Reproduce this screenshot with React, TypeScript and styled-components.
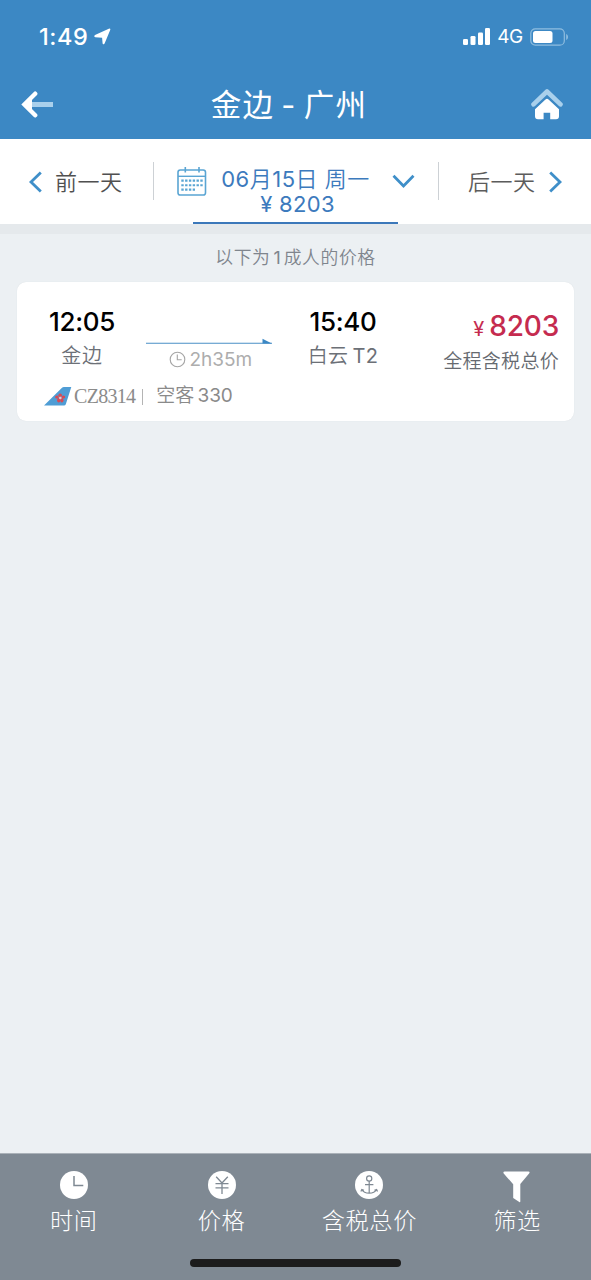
import React from 'react';
import styled, { createGlobalStyle } from 'styled-components';

const sans = `Inter, "Noto Sans CJK SC", sans-serif`;

const GlobalStyle = createGlobalStyle`
  * { box-sizing: border-box; }
  body { margin: 0; background: #ecf0f3; font-family: ${sans}; }
`;

const Screen = styled.div`
  width: 591px;
  height: 1280px;
  display: flex;
  flex-direction: column;
  background: #ecf0f3;
  overflow: hidden;
`;

const Header = styled.header`
  height: 139px;
  background: #3c88c4;
  color: #fff;
`;

const StatusBar = styled.div`
  height: 72px;
  padding: 1px 22px 0 39px;
  display: flex;
  align-items: center;
  justify-content: space-between;
`;

const StatusGroup = styled.div`
  display: flex;
  align-items: center;
`;

const NavBar = styled.div`
  height: 65px;
  padding: 0 27px 0 21px;
  display: flex;
  align-items: center;
  justify-content: space-between;
`;

const Label = styled.span<{
  $size: number;
  $color?: string;
  $weight?: number;
  $spacing?: number;
  $word?: number;
  $line?: number;
  $gap?: number;
  $end?: number;
  $serif?: boolean;
}>`
  font-family: ${p => (p.$serif ? '"Liberation Serif", serif' : sans)};
  font-size: ${p => p.$size}px;
  color: ${p => p.$color ?? 'inherit'};
  font-weight: ${p => p.$weight ?? 400};
  letter-spacing: ${p => p.$spacing ?? 0}px;
  word-spacing: ${p => p.$word ?? 0}px;
  line-height: ${p => p.$line ?? 26}px;
  margin-left: ${p => p.$gap ?? 0}px;
  margin-right: ${p => p.$end ?? 0}px;
  white-space: pre;
`;

const Digits = styled.span`
  font-weight: 400;
`;

const DateBar = styled.div`
  height: 85px;
  background: #fff;
  display: flex;
  align-items: flex-start;
`;

const DayButton = styled.div<{ $next?: boolean }>`
  width: ${p => (p.$next ? 152 : 153)}px;
  height: 85px;
  padding-left: ${p => (p.$next ? 29 : 28)}px;
  display: flex;
  align-items: center;
`;

const Separator = styled.div`
  width: 1px;
  height: 38px;
  margin-top: 23px;
  background: #cdd1d5;
`;

const DatePicker = styled.div`
  width: 284px;
  height: 85px;
  padding-left: 23px;
  display: flex;
  align-items: flex-start;
`;

const IconBox = styled.div<{ $top: number; $left?: number }>`
  display: flex;
  margin: ${p => p.$top}px 0 0 ${p => p.$left ?? 0}px;
`;

const DateText = styled.div`
  flex: none;
  width: 205px;
  height: 85px;
  margin: 0 -6px 0 -14px;
  padding-top: 28px;
  display: flex;
  flex-direction: column;
  align-items: center;
  border-bottom: 2px solid #3c78ba;
`;

const Row = styled.div`
  display: flex;
  align-items: baseline;
`;

const Strip = styled.div`
  height: 10px;
  background: #e5e9ec;
`;

const Notice = styled.div`
  height: 48px;
  padding-top: 11px;
  display: flex;
  justify-content: center;
  align-items: flex-start;
`;

const FlightCard = styled.article`
  width: 557px;
  height: 139px;
  margin-left: 17px;
  padding: 26px 15px 0 27px;
  background: #fff;
  border-radius: 9px;
  box-shadow: 0 0 1px #d5dade;
`;

const Journey = styled.div`
  height: 74px;
  display: flex;
`;

const Stop = styled.div<{ $width: number }>`
  width: ${p => p.$width}px;
  display: flex;
  flex-direction: column;
  align-items: center;
`;

const Duration = styled.div`
  width: 126px;
  margin: 30px 0 0 26px;
`;

const DurationText = styled.div`
  display: flex;
  align-items: center;
  padding-left: 23px;
  margin-top: 3px;
`;

const Price = styled.div`
  margin-left: auto;
  padding-top: 3px;
  display: flex;
  flex-direction: column;
  align-items: flex-end;
`;

const FlightInfo = styled.div`
  height: 28px;
  display: flex;
  align-items: center;
`;

const InfoBar = styled.div`
  width: 1px;
  height: 16px;
  margin: 2px 13px 0 7px;
  background: #b4b4b4;
`;

const Footer = styled.footer`
  height: 127px;
  margin-top: auto;
  border-top: 1px solid #aab1b8;
  background: #7f8993;
  color: #fff;
  display: flex;
  flex-direction: column;
  align-items: center;
`;

const Tabs = styled.div`
  width: 100%;
  height: 105px;
  display: flex;
`;

const Tab = styled.div`
  flex: 1;
  padding-top: 17px;
  display: flex;
  flex-direction: column;
  align-items: center;
`;

const TabIcon = styled.div`
  height: 34px;
`;

const HomeIndicator = styled.div`
  width: 211px;
  height: 8px;
  border-radius: 4px;
  background: #1c1c1c;
`;

const Chevron = ({ d, w, h }: { d: string; w: number; h: number }) => (
  <svg width={w} height={h} viewBox={`0 0 ${w} ${h}`} fill="none" stroke="#3f8fc9" strokeWidth="2.8">
    <path d={d} />
  </svg>
);

const Calendar = () => (
  <svg width="30" height="30" viewBox="0 0 30 30" fill="none" stroke="#5aa5d3">
    <rect x="1" y="3" width="27.5" height="25" rx="2.3" strokeWidth="1.6" />
    <path d="M1 9.3H28.5" strokeWidth="1.4" />
    <path d="M8.3 0V5.5M22 0V5.5" strokeWidth="1.6" />
    <path d="M4.3 13.6H26M4.3 18.2H26M4.3 22.6H18" strokeWidth="2.1" strokeDasharray="2.4 1.4" />
  </svg>
);

const tabs = [
  {
    name: '时间',
    icon: (
      <svg width="28" height="34" viewBox="0 0 28 34" fill="none">
        <circle cx="14" cy="14" r="14" fill="#fff" />
        <path d="M14 5V14.5H23.3" stroke="#7f8993" strokeWidth="1.5" />
      </svg>
    ),
  },
  {
    name: '价格',
    icon: (
      <svg width="28" height="34" viewBox="0 0 28 34" fill="none">
        <circle cx="14" cy="14" r="14" fill="#fff" />
        <path d="M8.2 5.8L14 12L19.8 5.8M14 12V23M7.5 12.6H20.5M7.5 16.8H20.5" stroke="#7f8993" strokeWidth="1.3" />
      </svg>
    ),
  },
  {
    name: '含税总价',
    icon: (
      <svg width="28" height="34" viewBox="0 0 28 34" fill="none">
        <circle cx="14" cy="14" r="14" fill="#fff" />
        <g stroke="#7f8993" strokeWidth="1.2">
          <circle cx="14.2" cy="7.5" r="2.6" />
          <path d="M14.2 10.1V22.2M10 13.6H18.4M6.8 18.7C9.5 23.2 18.8 23.2 21.6 18.7M5.9 20.6L6.8 18.5L9 19.3M22.5 20.6L21.6 18.5L19.4 19.3" />
        </g>
      </svg>
    ),
  },
  {
    name: '筛选',
    icon: (
      <svg width="28" height="34" viewBox="0 0 28 34">
        <path d="M1.8 .6H25.4Q27.4 .7 26.1 2.4L17.3 13V30.6Q17.2 31.5 16.3 31L10.2 27V13.3L.7 2.4Q-.3 .8 1.8 .6Z" fill="#fff" />
      </svg>
    ),
  },
];

export default function App() {
  return (
    <Screen>
      <GlobalStyle />
      <Header>
        <StatusBar>
          <StatusGroup>
            <Label $size={23.5} $weight={500} $spacing={0.6}>1:49</Label>
            <svg width="17" height="17" viewBox="0 0 17 17" style={{ marginLeft: 5 }}>
              <path d="M1 6.9L14.8 .7Q16.8 .1 16.2 2.1L10.6 15.6Q9.5 17.2 8.6 15.4L8.1 9.8L1.3 9.3Q-.7 8.4 1 6.9Z" fill="#fff" />
            </svg>
          </StatusGroup>
          <StatusGroup>
            <svg width="28" height="18" viewBox="0 0 28 18" fill="#fff">
              <rect x="0" y="11" width="5" height="6" rx="1.3" />
              <rect x="7.5" y="8" width="5" height="9" rx="1.3" />
              <rect x="15" y="4.5" width="5" height="12.5" rx="1.3" />
              <rect x="22" y="0" width="5" height="17" rx="1.3" />
            </svg>
            <Label $size={19} $gap={6.5} $spacing={-0.3} $line={28}>4G</Label>
            <svg width="39" height="18" viewBox="0 0 39 18" style={{ marginLeft: 7 }}>
              <rect x=".8" y=".8" width="33.5" height="16.4" rx="4.5" fill="none" stroke="#8fbddf" strokeWidth="1.2" />
              <rect x="3" y="3" width="19.5" height="12" rx="2.5" fill="#fff" />
              <path d="M36.2 6C38.6 7 38.6 11 36.2 12Z" fill="#8fbddf" />
            </svg>
          </StatusGroup>
        </StatusBar>
        <NavBar>
          <svg width="33" height="28" viewBox="0 0 33 28" fill="none">
            <path d="M10 13.5H32" stroke="#a9d0ec" strokeWidth="5" />
            <path d="M14.2 2.7L3.4 13.5L14.2 24.3" stroke="#fff" strokeWidth="4.4" strokeLinecap="round" />
            <path d="M3.2 13.5L11 6V21Z" fill="#fff" />
          </svg>
          <Label $size={30.5} $spacing={1.3} $word={-2.8} $line={38} $end={6}>金边 - 广州</Label>
          <svg width="34" height="32" viewBox="0 0 34 32" fill="none">
            <path d="M3.5 15.3L17 2.5L30.5 15.3" stroke="#a9d0ec" strokeWidth="4.6" strokeLinecap="round" strokeLinejoin="round" />
            <path d="M17 9.8Q17.8 9.8 18.8 10.8L29 20.3V27.3Q29 30.3 26 30.3H20.2V23.8H13.6V30.3H8Q5 30.3 5 27.3V20.3L15.2 10.8Q16.2 9.8 17 9.8Z" fill="#fff" />
          </svg>
        </NavBar>
      </Header>

      <DateBar>
        <DayButton>
          <Chevron w={15} h={22} d="M12.8 1.5L3 11L12.8 20.5" />
          <Label $size={22} $weight={350} $color="#505050" $spacing={0.5} $gap={12}>前一天</Label>
        </DayButton>
        <Separator />
        <DatePicker>
          <IconBox $top={28}><Calendar /></IconBox>
          <DateText>
            <Label $size={22} $weight={350} $color="#3c7abd" $spacing={0.5} $line={25}>
              <Digits>06</Digits>月<Digits>15</Digits>日 周一
            </Label>
            <Label $size={22} $color="#3c7abd" $line={25} $spacing={0.3} $gap={4}>¥ 8203</Label>
          </DateText>
          <IconBox $top={35}><Chevron w={23} h={15} d="M1.5 1.8L11.5 12L21.5 1.8" /></IconBox>
        </DatePicker>
        <Separator />
        <DayButton $next>
          <Label $size={22} $weight={350} $color="#5c5c5c" $spacing={0.5}>后一天</Label>
          <IconBox $top={0} $left={12}><Chevron w={15} h={22} d="M2.2 1.5L12 11L2.2 20.5" /></IconBox>
        </DayButton>
      </DateBar>
      <Strip />
      <Notice>
        <Label $size={17.8} $weight={350} $color="#7f858d" $spacing={0.6}>以下为</Label>
        <Label $size={17.8} $color="#7f858d" $gap={3} $end={3}>1</Label>
        <Label $size={17.8} $weight={350} $color="#7f858d" $spacing={0.6}>成人的价格</Label>
      </Notice>

      <FlightCard>
        <Journey>
          <Stop $width={76}>
            <Label $size={26} $weight={500} $color="#000" $spacing={-0.3} $line={28}>12:05</Label>
            <Label $size={20} $weight={350} $color="#6c7077" $line={40} $spacing={0.8}>金边</Label>
          </Stop>
          <Duration>
            <svg width="126" height="6" viewBox="0 0 126 6" style={{ display: 'block' }}>
              <path d="M0 5.3H126" stroke="#4a8fc6" strokeWidth="1.1" />
              <path d="M116.5 .8L125.8 5.5H116.5Z" fill="#3c88c4" />
            </svg>
            <DurationText>
              <svg width="17" height="17" viewBox="0 0 17 17" fill="none" stroke="#a5a5a5" strokeWidth="1.1">
                <circle cx="8.5" cy="8.5" r="7.3" />
                <path d="M8.3 3.5V8.8H12.7" />
              </svg>
              <Label $size={19} $color="#adadad" $gap={3.5} $line={25}>2h35m</Label>
            </DurationText>
          </Duration>
          <Stop $width={142}>
            <Label $size={26} $weight={500} $color="#000" $spacing={-0.3} $line={28}>15:40</Label>
            <Label $size={20} $weight={350} $color="#6c7077" $line={40} $spacing={0.4} $word={-2}>白云 <Digits>T2</Digits></Label>
          </Stop>
          <Price>
            <Row>
              <Label $size={20} $color="#c52b4f" $line={30}>¥</Label>
              <Label $size={28} $weight={500} $color="#c52b4f" $gap={5} $line={30} $spacing={-0.2}>8203</Label>
            </Row>
            <Label $size={19} $weight={350} $color="#666a70" $line={36} $spacing={0.3}>全程含税总价</Label>
          </Price>
        </Journey>
        <FlightInfo>
          <svg width="28" height="19" viewBox="0 0 28 19">
            <path d="M0 18.5L17.5 1.2Q18.7 0 20 0H27.3L21.8 17.2Q21.3 18.5 20 18.5Z" fill="#4f9dd5" />
            <g fill="#d94a55">
              <ellipse cx="12.9" cy="10" rx="1.8" ry="1.6" />
              <ellipse cx="19.4" cy="10" rx="1.8" ry="1.6" />
              <ellipse cx="16.2" cy="8.2" rx="1.8" ry="1.6" />
              <ellipse cx="14.7" cy="13.2" rx="1.6" ry="2.2" />
              <ellipse cx="17.9" cy="13.2" rx="1.6" ry="2.2" />
            </g>
            <circle cx="16.3" cy="11" r="1.3" fill="#f6c2be" />
          </svg>
          <Label $serif $size={20} $color="#8b8b8b" $gap={2} $spacing={-0.7}>CZ8314</Label>
          <InfoBar />
          <Label $size={19} $weight={350} $color="#8a8a8a" $spacing={-0.2} $word={-1.5} $line={28}>空客 <Digits>330</Digits></Label>
        </FlightInfo>
      </FlightCard>

      <Footer>
        <Tabs>
          {tabs.map(t => (
            <Tab key={t.name}>
              <TabIcon>{t.icon}</TabIcon>
              <Label $size={23.2} $weight={300} $spacing={0.6} $line={33}>{t.name}</Label>
            </Tab>
          ))}
        </Tabs>
        <HomeIndicator />
      </Footer>
    </Screen>
  );
}
